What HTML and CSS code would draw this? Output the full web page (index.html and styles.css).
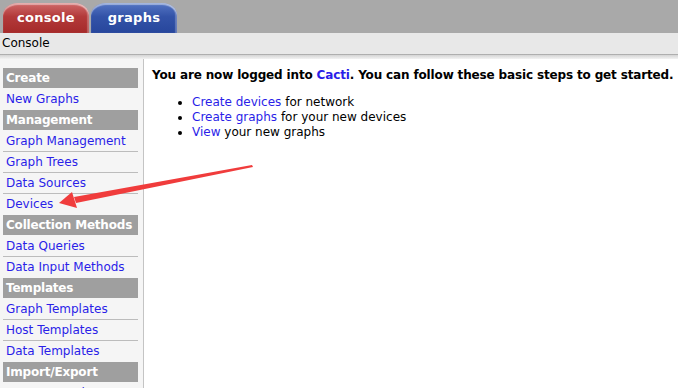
FILE: index.html
```html
<!DOCTYPE html>
<html lang="en">
<head>
    <meta charset="UTF-8">
    <title>Console</title>
    <link rel="stylesheet" href="styles.css">
</head>
<body>
    <div class="tabs">
        <a class="tab tab-console" href="#">console</a>
        <a class="tab tab-graphs" href="#">graphs</a>
    </div>
    <div class="crumb">Console</div>
    <div class="shadow"></div>

    <div class="layout">
        <nav class="menu">
            <div class="menu-head">Create</div>
            <a class="menu-item last" href="#">New Graphs</a>
            <div class="menu-head">Management</div>
            <a class="menu-item" href="#">Graph Management</a>
            <a class="menu-item" href="#">Graph Trees</a>
            <a class="menu-item" href="#">Data Sources</a>
            <a class="menu-item last" href="#">Devices</a>
            <div class="menu-head">Collection Methods</div>
            <a class="menu-item" href="#">Data Queries</a>
            <a class="menu-item last" href="#">Data Input Methods</a>
            <div class="menu-head">Templates</div>
            <a class="menu-item" href="#">Graph Templates</a>
            <a class="menu-item" href="#">Host Templates</a>
            <a class="menu-item last" href="#">Data Templates</a>
            <div class="menu-head">Import/Export</div>
            <a class="menu-item" href="#">Import Templates</a>
        </nav>

        <main class="content">
            <p class="lead">You are now logged into <a href="#">Cacti</a>. You can follow these basic steps to get started.</p>
            <ul class="steps">
                <li><a href="#">Create devices</a> for network</li>
                <li><a href="#">Create graphs</a> for your new devices</li>
                <li><a href="#">View</a> your new graphs</li>
            </ul>
        </main>
    </div>

    <!-- annotation arrow pointing at Devices -->
    <svg class="arrow" width="260" height="60" viewBox="0 0 260 60">
        <polygon points="252,5 253,7 76,43 74,37" fill="#f03c3c"/>
        <polygon points="59,43 72,32 77,48" fill="#f03c3c"/>
    </svg>
</body>
</html>
```

FILE: styles.css
```css
body {
    margin: 0;
    font-family: "DejaVu Sans", Verdana, sans-serif;
    font-size: 12px;
    background: #fff;
    color: #000;
    position: relative;
    height: 388px;
    overflow: hidden;
}
a {
    color: #2a1ee8;
    text-decoration: none;
}
.tabs {
    height: 33px;
    background: #a9a9a9;
    display: flex;
    align-items: flex-end;
    padding-left: 3px;
    gap: 2px;
}
.tab {
    width: 86px;
    height: 30px;
    border-radius: 15px 15px 0 0 / 12px 12px 0 0;
    color: #fff;
    font-weight: bold;
    font-size: 13px;
    letter-spacing: 0.3px;
    display: flex;
    align-items: center;
    justify-content: center;
    box-sizing: border-box;
    padding-bottom: 1px;
    box-shadow: inset 0 2px 1px rgba(255,255,255,0.45), inset -2px 0 1px rgba(255,255,255,0.25);
}
.tab-console {
    background: linear-gradient(#d06a6a, #b33a3a 45%, #a52a2a);
}
.tab-graphs {
    background: linear-gradient(#5576c4, #3353a8 45%, #27469c);
}
.crumb {
    height: 21px;
    line-height: 21px;
    background: #e8e8e8;
    padding-left: 2px;
}
.shadow {
    height: 5px;
    background: linear-gradient(#9a9a9a, #d8d8d8 30%, #f2f2f2);
}
.layout {
    display: flex;
    height: 340px;
}
.menu {
    flex: none;
    width: 144px;
    background: #f5f5f5;
    border-right: 1px solid #c4c4c4;
    padding: 9px 5px 0 3px;
    box-sizing: border-box;
    display: flex;
    flex-direction: column;
}
.menu-head {
    height: 20px;
    line-height: 20px;
    background: #9f9f9f;
    color: #fff;
    font-weight: bold;
    font-size: 12px;
    letter-spacing: -0.2px;
    white-space: nowrap;
    padding-left: 3px;
    margin-bottom: 1px;
}
.menu-item {
    height: 20px;
    line-height: 20px;
    padding-left: 3px;
    white-space: nowrap;
    border-bottom: 1px solid #bcbcbc;
}
.menu-item.last {
    border-bottom-color: transparent;
}
.content {
    flex: 1;
    padding: 6px 0 0 8px;
}
.lead {
    margin: 0;
    font-weight: bold;
    font-size: 12px;
    letter-spacing: -0.15px;
    line-height: 20px;
    white-space: nowrap;
}
.steps {
    margin: 10px 0 0;
    padding-left: 40px;
    font-size: 12px;
    line-height: 15px;
}
.arrow {
    position: absolute;
    left: 0;
    top: 160px;
}
```
